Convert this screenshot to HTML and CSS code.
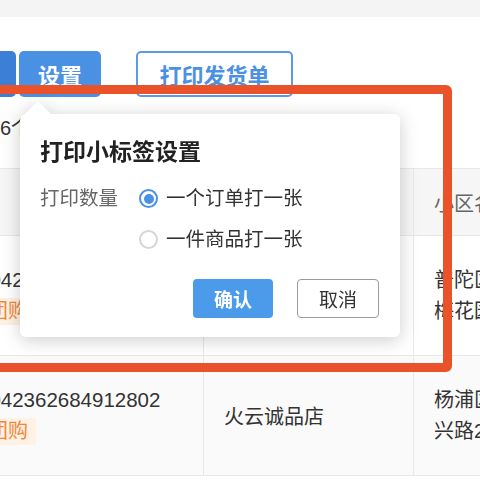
FILE: index.html
```html
<!DOCTYPE html>
<html lang="zh-CN">
<head>
  <meta charset="UTF-8">
  <meta name="viewport" content="width=device-width, initial-scale=1.0">
  <title>打印小标签设置</title>
  <link rel="stylesheet" href="styles.css">
</head>
<body>
  <div class="topbar"></div>

  <div class="toolbar">
    <button class="btn btn-dark">批量</button>
    <button class="btn btn-primary">设置</button>
    <button class="btn btn-outline">打印发货单</button>
  </div>

  <div class="summary">共6个订单</div>

  <table class="orders">
    <thead>
      <tr>
        <th class="col-order">订单号</th>
        <th class="col-shop">店铺名称</th>
        <th class="col-addr">小区名称</th>
      </tr>
    </thead>
    <tbody>
      <tr>
        <td>
          <div class="order-no">1042362684912801</div>
          <span class="tag">团购</span>
        </td>
        <td>火云诚品店</td>
        <td class="addr">普陀区真如镇<br>梅花园小区</td>
      </tr>
      <tr class="alt">
        <td>
          <div class="order-no">1042362684912802</div>
          <span class="tag">团购</span>
        </td>
        <td>火云诚品店</td>
        <td class="addr">杨浦区长白新村<br>兴路25号</td>
      </tr>
    </tbody>
  </table>

  <div class="highlight"></div>

  <div class="popover">
    <div class="arrow"></div>
    <div class="popover-body">
      <h3>打印小标签设置</h3>
      <div class="field">
        <span class="label">打印数量</span>
        <div class="options">
          <label class="option"><span class="radio checked"></span>一个订单打一张</label>
          <label class="option"><span class="radio"></span>一件商品打一张</label>
        </div>
      </div>
      <div class="actions">
        <button class="btn-ok">确认</button>
        <button class="btn-cancel">取消</button>
      </div>
    </div>
  </div>
</body>
</html>
```

FILE: styles.css
```css
body {
  margin: 0;
  padding: 0;
  background-color: white;
  color: #333;
  font-family: "Liberation Sans", "Noto Sans CJK SC", sans-serif;
  overflow: hidden;
}

.topbar {
  height: 17px;
  background-color: #f4f4f5;
}

.toolbar {
  display: flex;
  align-items: center;
  margin-top: 34px;
  margin-left: -66px;
  height: 46px;
}

.btn {
  height: 46px;
  font-family: inherit;
  font-size: 22px;
  font-weight: bold;
  border-radius: 5px;
  cursor: pointer;
}

.btn-dark {
  width: 82px;
  background-color: #3c7fd7;
  color: white;
  border: none;
}

.btn-primary {
  width: 82px;
  margin-left: 3px;
  background-color: #4a91e3;
  color: white;
  border: none;
}

.btn-outline {
  width: 157px;
  margin-left: 35px;
  background-color: white;
  color: #4a91e3;
  border: 2px solid #5b9be6;
}

.summary {
  margin-top: 16px;
  margin-left: -20px;
  font-size: 20px;
  line-height: 30px;
}

.orders {
  margin-top: 25px;
  margin-left: -41px;
  width: 653px;
  table-layout: fixed;
  border-collapse: collapse;
  font-size: 20px;
}

.orders th,
.orders td {
  padding: 0 20px;
  text-align: left;
  border-top: 1px solid #e8e8e8;
  border-bottom: 1px solid #e8e8e8;
  border-left: 1px solid #e8e8e8;
}

.orders th {
  height: 66px;
  background-color: #f6f6f6;
  color: #666;
  font-weight: normal;
}

.orders td {
  height: 119px;
  vertical-align: middle;
}

.col-order {
  width: 203px;
}

.orders th.col-order {
  text-align: center;
}

.col-shop {
  width: 169px;
}

.col-addr {
  width: 200px;
}

.orders tr.alt td {
  background-color: #fafafa;
}

.order-no {
  font-size: 20.5px;
  line-height: 28px;
  margin-left: -2px;
}

.tag {
  display: inline-block;
  margin-top: 4px;
  padding: 0 8px;
  line-height: 27px;
  font-size: 20px;
  color: #f0883a;
  background-color: #fff1e4;
  border-radius: 3px;
}

.addr {
  white-space: nowrap;
  line-height: 31px;
}

.highlight {
  position: absolute;
  left: -20px;
  top: 85px;
  width: 454px;
  height: 269px;
  border: 9px solid #ea5329;
  border-radius: 6px;
  pointer-events: none;
}

.popover {
  position: absolute;
  left: 20px;
  top: 101px;
  width: 380px;
  filter: drop-shadow(0 3px 9px rgba(0, 0, 0, 0.2));
}

.arrow {
  width: 26px;
  height: 13px;
  margin-left: 5px;
  background-color: white;
  clip-path: polygon(50% 0, 100% 100%, 0 100%);
}

.popover-body {
  background-color: white;
  border-radius: 6px;
  padding: 23px 21px 19px 20px;
}

.popover-body h3 {
  margin: 0;
  font-size: 23px;
  line-height: 30px;
  font-weight: bold;
  color: #222;
}

.field {
  display: flex;
  margin-top: 11px;
}

.label {
  width: 99px;
  font-size: 19.5px;
  line-height: 41px;
  color: #666;
}

.options {
  display: flex;
  flex-direction: column;
}

.option {
  display: flex;
  align-items: center;
  gap: 8px;
  font-size: 19.5px;
  line-height: 41px;
  color: #333;
}

.radio {
  width: 15px;
  height: 15px;
  border: 2px solid #d6d6d6;
  border-radius: 50%;
  box-sizing: content-box;
  position: relative;
}

.radio.checked {
  border-color: #4a91e3;
  background-color: white;
}

.radio.checked::after {
  content: "";
  position: absolute;
  left: 2.5px;
  top: 2.5px;
  width: 10px;
  height: 10px;
  border-radius: 50%;
  background-color: #4a91e3;
}

.actions {
  display: flex;
  justify-content: flex-end;
  gap: 24px;
  margin-top: 19px;
}

.btn-ok,
.btn-cancel {
  width: 82px;
  height: 39px;
  font-family: inherit;
  font-size: 19px;
  border-radius: 4px;
  cursor: pointer;
}

.btn-ok {
  width: 80px;
  background-color: #4b9bea;
  color: white;
  font-weight: bold;
  border: none;
}

.btn-cancel {
  background-color: white;
  color: #333;
  border: 1px solid #9a9a9a;
}
```
